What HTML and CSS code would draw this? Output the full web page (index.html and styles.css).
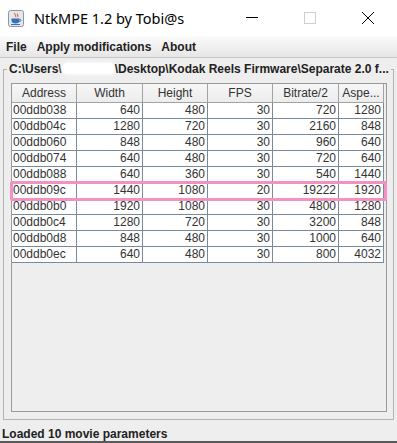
FILE: index.html
```html
<!DOCTYPE html>
<html lang="en">
<head>
    <meta charset="UTF-8">
    <meta name="viewport" content="width=device-width, initial-scale=1.0">
    <title>NtkMPE 1.2 by Tobi@s</title>
    <link rel="stylesheet" href="styles.css">
</head>
<body>
    <div class="window">
        <div class="titlebar">
            <svg class="app-icon" width="16" height="17" viewBox="0 0 16 17">
                <rect x="0.5" y="0.5" width="15" height="16" rx="2" fill="#e4e8ee" stroke="#8a96a6"/>
                <path d="M7 3 C5.5 4.5 9 5 7.5 7 M9.5 3.5 C8.5 5 11 5.5 9.5 7" stroke="#e06a1c" stroke-width="1.1" fill="none"/>
                <path d="M3.5 8.5 H11.5 V10.5 C11.5 12.5 10 13.5 7.5 13.5 C5 13.5 3.5 12.5 3.5 10.5 Z" fill="#3d6fb3"/>
                <path d="M11.5 9.3 C13.5 9.3 13.5 11.5 11.2 11.6" stroke="#3d6fb3" stroke-width="1" fill="none"/>
                <path d="M3 14.5 H12" stroke="#3d6fb3" stroke-width="1"/>
            </svg>
            <span class="title">NtkMPE 1.2 by Tobi@s</span>
            <div class="controls">
                <span class="ctrl">
                    <svg width="14" height="14" viewBox="0 0 14 14"><path d="M1 6.5 H13" stroke="#000" stroke-width="1"/></svg>
                </span>
                <span class="ctrl">
                    <svg width="14" height="14" viewBox="0 0 14 14"><rect x="1.5" y="1.5" width="11" height="11" fill="none" stroke="#cfcfcf" stroke-width="1"/></svg>
                </span>
                <span class="ctrl">
                    <svg width="14" height="14" viewBox="0 0 14 14"><path d="M1 1 L13 13 M13 1 L1 13" stroke="#000" stroke-width="1"/></svg>
                </span>
            </div>
        </div>

        <div class="menubar">
            <span class="menu-item">File</span>
            <span class="menu-item">Apply modifications</span>
            <span class="menu-item">About</span>
        </div>

        <div class="content">
            <fieldset class="panel">
                <legend>C:\Users\<span class="redact"></span>\Desktop\Kodak Reels Firmware\Separate 2.0 f...</legend>
                <div class="scrollpane">
                    <table class="params">
                        <colgroup>
                            <col style="width: 65px">
                            <col style="width: 66px">
                            <col style="width: 65px">
                            <col style="width: 65px">
                            <col style="width: 66px">
                            <col style="width: 45px">
                        </colgroup>
                        <thead>
                            <tr><th>Address</th><th>Width</th><th>Height</th><th>FPS</th><th>Bitrate/2</th><th>Aspe...</th></tr>
                        </thead>
                        <tbody>
                            <tr><td>00ddb038</td><td>640</td><td>480</td><td>30</td><td>720</td><td>1280</td></tr>
                            <tr><td>00ddb04c</td><td>1280</td><td>720</td><td>30</td><td>2160</td><td>848</td></tr>
                            <tr><td>00ddb060</td><td>848</td><td>480</td><td>30</td><td>960</td><td>640</td></tr>
                            <tr><td>00ddb074</td><td>640</td><td>480</td><td>30</td><td>720</td><td>640</td></tr>
                            <tr><td>00ddb088</td><td>640</td><td>360</td><td>30</td><td>540</td><td>1440</td></tr>
                            <tr><td>00ddb09c</td><td>1440</td><td>1080</td><td>20</td><td>19222</td><td>1920</td></tr>
                            <tr><td>00ddb0b0</td><td>1920</td><td>1080</td><td>30</td><td>4800</td><td>1280</td></tr>
                            <tr><td>00ddb0c4</td><td>1280</td><td>720</td><td>30</td><td>3200</td><td>848</td></tr>
                            <tr><td>00ddb0d8</td><td>848</td><td>480</td><td>30</td><td>1000</td><td>640</td></tr>
                            <tr><td>00ddb0ec</td><td>640</td><td>480</td><td>30</td><td>800</td><td>4032</td></tr>
                        </tbody>
                    </table>
                </div>
            </fieldset>
            <div class="status">Loaded 10 movie parameters</div>
        </div>

        <!-- pink annotation box over the 00ddb09c row -->
        <div class="marker"></div>
    </div>
</body>
</html>
```

FILE: styles.css
```css
body {
    margin: 0;
    font-family: "Liberation Sans", Arial, sans-serif;
    background: #ffffff;
}
.window {
    position: relative;
    width: 397px;
    height: 443px;
    display: flex;
    flex-direction: column;
    overflow: hidden;
}
.titlebar {
    height: 36px;
    background: #ffffff;
    display: flex;
    align-items: center;
    flex-shrink: 0;
}
.app-icon {
    margin-left: 8px;
    margin-top: 1px;
}
.title {
    margin-left: 10px;
    font-family: "Noto Sans", sans-serif;
    font-size: 14.5px;
    color: #000;
}
.controls {
    margin-left: auto;
    display: flex;
    height: 100%;
}
.ctrl {
    width: 58px;
    display: flex;
    align-items: center;
    justify-content: center;
    padding-bottom: 1px;
}
.menubar {
    height: 21px;
    background: linear-gradient(#fbfbfb, #e6e6e6);
    border-bottom: 1px solid #c6c6c6;
    display: flex;
    align-items: center;
    padding-left: 1px;
    flex-shrink: 0;
}
.menu-item {
    padding: 0 5px;
    font-size: 12px;
    font-weight: bold;
    color: #222;
}
.content {
    flex: 1;
    background: #eeeeee;
    display: flex;
    flex-direction: column;
}
.panel {
    margin: 4px 3px 0 3px;
    padding: 6px 6px 7px 7px;
    border: 1px solid #b4b4b4;
    min-width: 0;
}
.panel legend {
    margin-left: -4px;
    padding: 0 2px;
    font-size: 12px;
    line-height: 15px;
    font-weight: bold;
    color: #222;
    white-space: nowrap;
}
.redact {
    display: inline-block;
    width: 53px;
    height: 11px;
    vertical-align: -1px;
    background: #ffffff;
    border-radius: 6px;
    box-shadow: 0 0 3px 1px #fbfbfb;
}
.scrollpane {
    height: 327px;
    border: 1px solid #9a9a9a;
    background: #eeeeee;
}
.params {
    table-layout: fixed;
    width: 372px;
    border-collapse: separate;
    border-spacing: 0;
    font-size: 12px;
    color: #333333;
}
.params th {
    height: 18px;
    padding: 0;
    font-weight: normal;
    text-align: center;
    background: linear-gradient(#f7f7f7, #ececec);
    border-right: 1px solid #a3a3a3;
    border-bottom: 1px solid #a3a3a3;
    overflow: hidden;
    white-space: nowrap;
}
.params td {
    height: 15px;
    padding: 0 2px 0 1px;
    line-height: 15px;
    background: #ffffff;
    text-align: right;
    border-right: 1px solid #7a8a99;
    border-bottom: 1px solid #7a8a99;
    white-space: nowrap;
    overflow: hidden;
}
.params td:first-child {
    text-align: left;
}
.status {
    height: 14px;
    padding-top: 7px;
    padding-left: 2px;
    line-height: 14px;
    font-size: 12px;
    font-weight: bold;
    color: #222;
    border-bottom: 2px solid #5a5a5a;
    margin-top: auto;
}
.marker {
    position: absolute;
    left: 10px;
    top: 181px;
    width: 377px;
    height: 20px;
    box-sizing: border-box;
    border: 3px solid #f291c2;
    border-radius: 2px;
}
```
